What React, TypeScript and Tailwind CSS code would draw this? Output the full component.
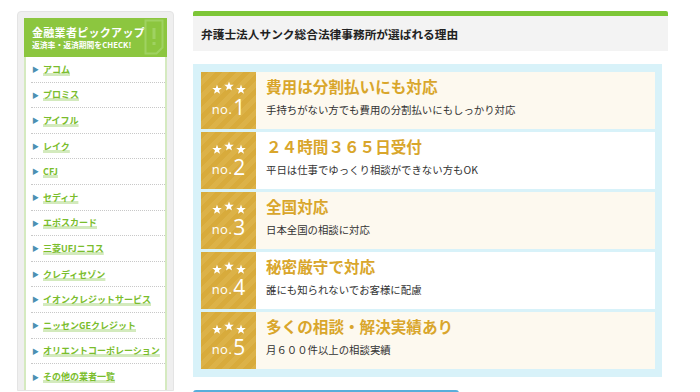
import React from "react";

const lenders = [
  "アコム",
  "プロミス",
  "アイフル",
  "レイク",
  "CFJ",
  "セディナ",
  "エポスカード",
  "三菱UFJニコス",
  "クレディセゾン",
  "イオンクレジットサービス",
  "ニッセンGEクレジット",
  "オリエントコーポレーション",
  "その他の業者一覧",
];

const reasons = [
  { title: "費用は分割払いにも対応", text: "手持ちがない方でも費用の分割払いにもしっかり対応" },
  { title: "２４時間３６５日受付", text: "平日は仕事でゆっくり相談ができない方もOK" },
  { title: "全国対応", text: "日本全国の相談に対応" },
  { title: "秘密厳守で対応", text: "誰にも知られないでお客様に配慮" },
  { title: "多くの相談・解決実績あり", text: "月６００件以上の相談実績" },
];

const font = "font-['Noto_Sans_CJK_JP','Noto_Sans',sans-serif]";

const STAR = "M5 0.4 6.2 3.7 9.8 3.8 7 6 8 9.5 5 7.5 2 9.5 3 6 0.2 3.8 3.8 3.7z";

function Stars() {
  return (
    <svg width="34" height="13" viewBox="0 0 34 13" fill="#fff">
      <path d={STAR} transform="translate(0 3.2)" />
      <path d={STAR} transform="translate(12 0)" />
      <path d={STAR} transform="translate(24 3.2)" />
    </svg>
  );
}

function Badge({ n }: { n: number }) {
  return (
    <div className="w-[55px] shrink-0 flex flex-col items-center bg-[#d9ad3f] bg-[image:repeating-linear-gradient(135deg,#d8ab3c_0_5px,#dcb248_5px_10px)] text-white">
      <div className="mt-[9px]">
        <Stars />
      </div>
      <div className="flex items-end mt-[5px] h-[17px] font-['Open_Sans',sans-serif]">
        <span className="block leading-[12px] text-[13px] font-medium tracking-[0.5px] mb-[1px]">no.</span>
        <span className="block leading-[17px] text-[21px] ml-[1px]">{n}</span>
      </div>
    </div>
  );
}

export default function App() {
  return (
    <div className={`w-[700px] h-[392px] overflow-hidden bg-white flex gap-[19px] pl-[17px] pt-[11px] ${font}`}>
      {/* sidebar */}
      <aside className="w-[157px] shrink-0 px-[6px] pt-[6px] bg-[#efefef] border border-[#e4e4e4] rounded-t-[4px] self-start">
        <div className="relative h-[39px] bg-[#8cc63f] pl-[8px] pt-[7px] text-white font-bold overflow-hidden">
          <div className="text-[11px] leading-[14px] tracking-[0.3px]">金融業者ピックアップ</div>
          <div className="text-[7.8px] leading-[12px]">返済率・返済期間をCHECK!</div>
          <svg className="absolute right-[3px] top-[1px]" width="20" height="36" viewBox="0 0 20 36" fill="none">
            <path d="M1.5 1.5h17v27l-6 6h-11z" stroke="#9fd262" strokeWidth="2" />
            <path d="M10 9v11M10 23v3" stroke="#9fd262" strokeWidth="3" />
          </svg>
        </div>
        <ul className="bg-white border-x-2 border-[#d5eac0] pl-[5px]">
          {lenders.map((l) => (
            <li key={l} className="h-[25.6px] flex items-center border-b border-dotted border-[#c8c8c8] last:border-b-0">
              <span className="text-[7px] text-[#4b90b3] w-[11px] ml-[1px]">▶</span>
              <a
                href="#"
                className="text-[9px] font-bold whitespace-nowrap text-[#7abd2c] underline decoration-[#d3eabd] decoration-[3px] underline-offset-[0px] leading-none"
              >
                {l}
              </a>
            </li>
          ))}
        </ul>
      </aside>

      {/* main */}
      <main className="w-[475px] shrink-0">
        <div className="h-[5px] bg-[#7dc637] rounded-t-[2px]" />
        <div className="h-[35px] bg-[#f3f3f3] flex items-center pl-[8px]">
          <h2 className="text-[11.7px] font-bold text-[#222]">弁護士法人サンク総合法律事務所が選ばれる理由</h2>
        </div>

        <div className="mt-[13px] w-[469px] bg-[#d8f2f9] pl-[8px] pr-[7px] py-[8px] flex flex-col gap-[3px]">
          {reasons.map((r, i) => (
            <div key={r.title} className={`h-[57px] flex ${i % 2 === 0 ? "bg-[#fdf9ef]" : "bg-white"}`}>
              <Badge n={i + 1} />
              <div className="pl-[10px] pt-[4px]">
                <div className="text-[15.6px] font-bold text-[#d9a62b] leading-[20px]">{r.title}</div>
                <div className="text-[10.4px] text-[#333] mt-[7px] leading-[14px]">{r.text}</div>
              </div>
            </div>
          ))}
        </div>

        <div className="mt-[13px] w-[266px] h-[4px] bg-[#58aedb] rounded-t-[3px]" />
      </main>
    </div>
  );
}
